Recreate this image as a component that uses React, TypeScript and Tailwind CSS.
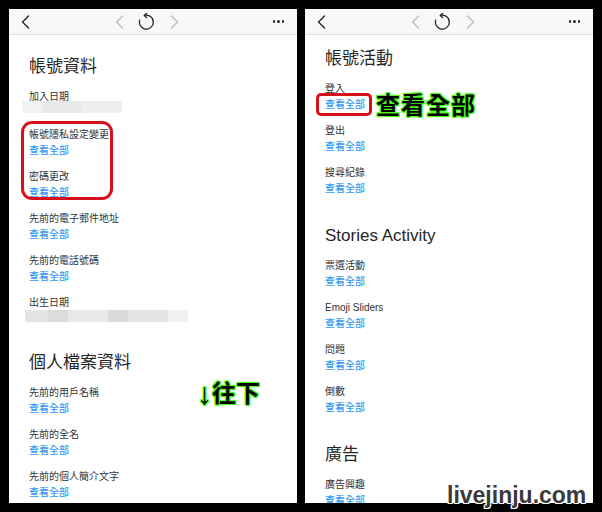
import React from "react";

const font = "font-['Liberation_Sans','Noto_Sans_CJK_TC',sans-serif]";

type Row = { label: string; kind?: "link" | "bar1" | "bar2" };
type Section = { title: string; rows: Row[] };

const leftSections: Section[] = [
  {
    title: "帳號資料",
    rows: [
      { label: "加入日期", kind: "bar1" },
      { label: "帳號隱私設定變更" },
      { label: "密碼更改" },
      { label: "先前的電子郵件地址" },
      { label: "先前的電話號碼" },
      { label: "出生日期", kind: "bar2" },
    ],
  },
  {
    title: "個人檔案資料",
    rows: [
      { label: "先前的用戶名稱" },
      { label: "先前的全名" },
      { label: "先前的個人簡介文字" },
    ],
  },
];

const rightSections: Section[] = [
  {
    title: "帳號活動",
    rows: [{ label: "登入" }, { label: "登出" }, { label: "搜尋紀錄" }],
  },
  {
    title: "Stories Activity",
    rows: [
      { label: "票選活動" },
      { label: "Emoji Sliders" },
      { label: "問題" },
      { label: "倒數" },
    ],
  },
  {
    title: "廣告",
    rows: [{ label: "廣告興趣" }],
  },
];

function Chevron({ dir, gray }: { dir: "left" | "right"; gray?: boolean }) {
  return (
    <svg width="9" height="14" viewBox="0 0 9 14" fill="none">
      <path
        d={dir === "left" ? "M7.5 1 L1.5 7 L7.5 13" : "M1.5 1 L7.5 7 L1.5 13"}
        stroke={gray ? "#bdbdbd" : "#262626"}
        strokeWidth="1.4"
        strokeLinecap="round"
        strokeLinejoin="round"
      />
    </svg>
  );
}

function Reload() {
  return (
    <svg width="18" height="18" viewBox="0 0 18 18" fill="none">
      <path
        d="M2.6 7.2 A7 7 0 1 0 8.3 2.2"
        stroke="#262626"
        strokeWidth="1.3"
        strokeLinecap="round"
      />
      <path
        d="M9.6 0.4 L7.2 2.4 L9.6 4.5"
        stroke="#262626"
        strokeWidth="1.3"
        strokeLinecap="round"
        strokeLinejoin="round"
      />
    </svg>
  );
}

function Header() {
  return (
    <div className="h-[26px] shrink-0 flex items-center bg-[#f8f8f8] border-b border-[#dedede] pl-[12px] pr-[13px]">
      <Chevron dir="left" />
      <div className="ml-[85px]">
        <Chevron dir="left" gray />
      </div>
      <div className="ml-[13px] mt-[1px]">
        <Reload />
      </div>
      <div className="ml-[15px]">
        <Chevron dir="right" gray />
      </div>
      <div className="ml-auto flex gap-[2px] items-center">
        <span className="w-[2.5px] h-[2.5px] rounded-full bg-[#262626]" />
        <span className="w-[2.5px] h-[2.5px] rounded-full bg-[#262626]" />
        <span className="w-[2.5px] h-[2.5px] rounded-full bg-[#262626]" />
      </div>
    </div>
  );
}

function BlurBar1() {
  return (
    <div className="flex h-[12px] ml-[-7px] mt-[-4px] mb-[4px] w-[100px]">
      <div className="w-[20px] bg-[#f2f2f2]" />
      <div className="w-[40px] bg-[#e9e9e9]" />
      <div className="w-[40px] bg-[#efefef]" />
    </div>
  );
}

function BlurBar2() {
  return (
    <div className="flex h-[12px] ml-[-4px] mt-[-1px] mb-[2px] w-[163px]">
      <div className="w-[23px] bg-[#e4e4e4]" />
      <div className="w-[20px] bg-[#dcdcdc]" />
      <div className="w-[40px] bg-[#e9e9e9]" />
      <div className="w-[20px] bg-[#dadada]" />
      <div className="w-[40px] bg-[#e5e5e5]" />
      <div className="w-[20px] bg-[#f1f1f1]" />
    </div>
  );
}

function Content({ sections, padTop }: { sections: Section[]; padTop: string }) {
  return (
    <div className={`flex flex-col px-[20px] ${padTop}`}>
      {sections.map((s, si) => (
        <div key={s.title} className={`flex flex-col ${si > 0 ? "mt-[27px]" : ""}`}>
          <h2 className="text-[17px] leading-[24px] text-[#262626] font-normal">{s.title}</h2>
          {s.rows.map((r) => (
            <div key={r.label} className="flex flex-col mt-[10px]">
              <div className="text-[10px] leading-[16px] text-[#333333]">{r.label}</div>
              {r.kind === "bar1" ? (
                <BlurBar1 />
              ) : r.kind === "bar2" ? (
                <BlurBar2 />
              ) : (
                <div className="text-[10px] leading-[16px] text-[#3897f0] font-medium">查看全部</div>
              )}
            </div>
          ))}
        </div>
      ))}
    </div>
  );
}

const glow =
  "[text-shadow:1px_0_0_#4cff1a,-1px_0_0_#4cff1a,0_1px_0_#4cff1a,0_-1px_0_#4cff1a,1px_1px_0_#4cff1a,-1px_-1px_0_#4cff1a,1px_-1px_0_#4cff1a,-1px_1px_0_#4cff1a,0_0_3px_#4cff1a]";

export default function App() {
  return (
    <div className={`relative w-[602px] h-[512px] bg-black flex gap-[8px] p-[9px] overflow-hidden ${font}`}>
      <div className="relative w-[288px] h-[494px] bg-white flex flex-col overflow-hidden">
        <Header />
        <Content sections={leftSections} padTop="pt-[20px]" />
        <div className="absolute left-[12px] top-[112px] w-[92px] h-[79px] border-[3px] border-[#d8101c] rounded-[11px]" />
        <div className={`absolute left-[188px] top-[370px] flex items-center text-[24px] leading-[30px] font-semibold text-black ${glow}`}>
          <span className="text-[30px] font-bold">↓</span>
          <span>往下</span>
        </div>
      </div>
      <div className="relative w-[288px] h-[494px] bg-white flex flex-col overflow-hidden">
        <Header />
        <Content sections={rightSections} padTop="pt-[12px]" />
        <div className="absolute left-[11px] top-[84px] w-[56px] h-[23px] border-[3px] border-[#d8101c] rounded-[5px]" />
        <div className={`absolute left-[71px] top-[83px] text-[24px] leading-[28px] font-semibold tracking-[1px] text-black ${glow}`}>
          查看全部
        </div>
      </div>
      <div className="absolute left-[447px] top-[481px] text-[23px] leading-[28px] font-bold text-[#3a3a3a] [text-shadow:1px_0_0_#fff,-1px_0_0_#fff,0_1px_0_#fff,0_-1px_0_#fff,1px_1px_0_#fff,-1px_-1px_0_#fff,1px_-1px_0_#fff,-1px_1px_0_#fff]">
        livejinju.com
      </div>
    </div>
  );
}
